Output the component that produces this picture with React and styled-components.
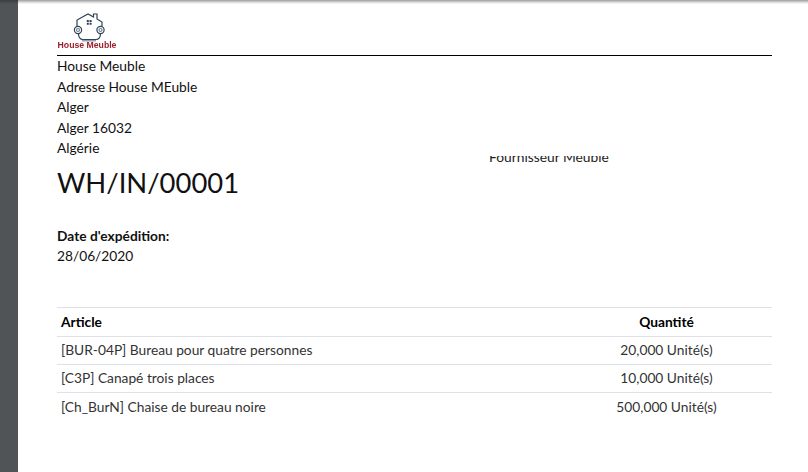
import React from 'react';
import styled, { createGlobalStyle } from 'styled-components';

const Global = createGlobalStyle`
  html, body { margin: 0; padding: 0; background: #fff; }
  body { font-family: Lato, "Open Sans", sans-serif; color: #111; overflow: hidden; }
`;

const Viewer = styled.div`
  display: flex;
  width: 808px;
  height: 472px;
  overflow: hidden;
`;

const Gutter = styled.div`
  width: 18px;
  flex: none;
  background: linear-gradient(#3a3d3f, #505457 4px);
`;

const Sheet = styled.div`
  flex: 1;
  background: linear-gradient(#9c9c9c, #d4d4d4 2px, #fff 4px);
  padding: 2px 36px 0 39px;
  box-sizing: border-box;
`;

const Header = styled.div`
  height: 53px;
  border-bottom: 1px solid #000;
  display: flex;
  align-items: flex-end;
`;

const Logo = styled.div`
  width: 60px;
  padding-top: 3px;
  margin-bottom: 5px;
  display: flex;
  flex-direction: column;
  align-items: center;
  filter: blur(0.3px);

  svg {
    overflow: visible;
  }
`;

const LogoName = styled.div`
  font-family: "Liberation Sans", sans-serif;
  font-size: 8.7px;
  font-weight: 700;
  line-height: 10px;
  color: #9c1f2c;
  white-space: nowrap;
`;

const Columns = styled.div`
  display: flex;
`;

const LeftColumn = styled.div`
  width: 432px;
`;

const RightColumn = styled.div`
  padding-top: 100px;
`;

const Address = styled.div`
  font-size: 13.75px;
  line-height: 20.5px;
  color: #111;
`;

const Clipped = styled.div`
  height: 8px;
  overflow: hidden;
  display: flex;
  align-items: flex-end;
  font-size: 13.8px;
  line-height: 15px;
  color: #222;
`;

const Title = styled.h1`
  margin: 0;
  font-size: 27.4px;
  font-weight: 400;
  line-height: 48px;
  color: #111;
`;

const DateBlock = styled.div`
  margin-top: 19px;
  font-size: 13.75px;
  line-height: 20px;
`;

const DateLabel = styled.div`
  font-weight: 700;
`;

const Table = styled.div`
  margin-top: 41px;
  border-top: 1px solid #dee2e6;
`;

const Row = styled.div`
  display: grid;
  grid-template-columns: 1fr 211px;
  height: ${p => p.$h}px;
  align-items: center;
  padding: 0 0 ${p => (p.$head ? 0 : 2)}px 4px;
  box-sizing: border-box;
  font-size: 13.75px;
  color: ${p => (p.$head ? '#000' : '#333')};
  font-weight: ${p => (p.$head ? 700 : 400)};
  border-bottom: ${p => (p.$last ? 'none' : '1px solid #dee2e6')};
`;

const Qty = styled.div`
  text-align: center;
`;

const rows = [
  ['[BUR-04P] Bureau pour quatre personnes', '20,000 Unité(s)', 28],
  ['[C3P] Canapé trois places', '10,000 Unité(s)', 28],
  ['[Ch_BurN] Chaise de bureau noire', '500,000 Unité(s)', 29],
];

function HouseIcon() {
  return (
    <svg width="38" height="28" viewBox="0 0 38 28" fill="none" stroke="#2f4257" strokeWidth="1.2">
      <path d="M9 14 L9 8 L20 2 L25.5 5 L25.5 2 L29 2 L29 7 L34 10 L34 14" />
      <path d="M10.5 21.5 Q10.5 27.5 15 27.5 L28 27.5 Q32.5 27.5 32.5 21.5" />
      <path d="M14 28.8 L28 28.8" stroke="#7c8a98" />
      <circle cx="10" cy="18" r="3.6" />
      <circle cx="10" cy="18" r="1.5" stroke="#6f8296" />
      <circle cx="32.5" cy="18" r="3.6" />
      <circle cx="32.5" cy="18" r="1.5" stroke="#6f8296" />
      <path d="M18.8 8h2v2h-2zM21.6 8h2v2h-2zM18.8 10.8h2v2h-2zM21.6 10.8h2v2h-2z" fill="#2f4257" stroke="none" />
    </svg>
  );
}

export default function App() {
  return (
    <Viewer>
      <Global />
      <Gutter />
      <Sheet>
        <Header>
          <Logo>
            <HouseIcon />
            <LogoName>House Meuble</LogoName>
          </Logo>
        </Header>
        <Columns>
          <LeftColumn>
            <Address>
              <div>House Meuble</div>
              <div>Adresse House MEuble</div>
              <div>Alger</div>
              <div>Alger 16032</div>
              <div>Algérie</div>
            </Address>
            <Title>WH/IN/00001</Title>
          </LeftColumn>
          <RightColumn>
            <Clipped>Fournisseur Meuble</Clipped>
          </RightColumn>
        </Columns>
        <DateBlock>
          <DateLabel>Date d'expédition:</DateLabel>
          <div>28/06/2020</div>
        </DateBlock>
        <Table>
          <Row $head $h={29}>
            <div>Article</div>
            <Qty>Quantité</Qty>
          </Row>
          {rows.map(([name, qty, h], i) => (
            <Row key={name} $h={h} $last={i === rows.length - 1}>
              <div>{name}</div>
              <Qty>{qty}</Qty>
            </Row>
          ))}
        </Table>
      </Sheet>
    </Viewer>
  );
}
